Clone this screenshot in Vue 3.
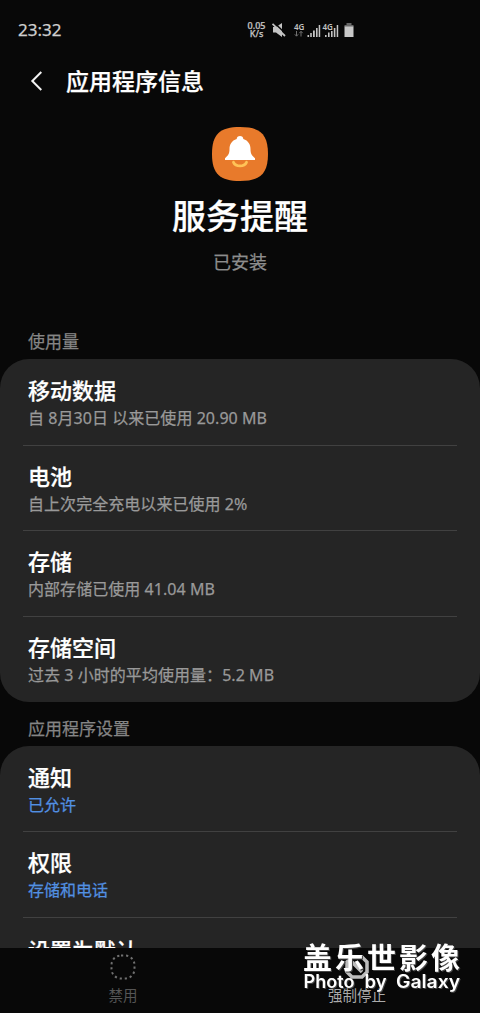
<script setup>
const sections = [
  {
    label: '使用量',
    rows: [
      { title: '移动数据', sub: '自 8月30日 以来已使用 20.90 MB' },
      { title: '电池', sub: '自上次完全充电以来已使用 2%' },
      { title: '存储', sub: '内部存储已使用 41.04 MB' },
      { title: '存储空间', sub: '过去 3 小时的平均使用量：5.2 MB' },
    ],
  },
  {
    label: '应用程序设置',
    rows: [
      { title: '通知', sub: '已允许', link: true },
      { title: '权限', sub: '存储和电话', link: true },
      { title: '设置为默认', sub: '' },
    ],
  },
]
</script>

<template>
  <div class="screen">
    <header class="status">
      <span class="clock">23:32</span>
      <div class="indicators">
        <div class="speed"><span>0.05</span><span>K/s</span></div>
        <svg class="mute" width="14" height="14" viewBox="0 0 14 14">
          <path d="M1 4h3L10 0v14L4 9.500H1z" fill="#c4c4c4" />
          <path d="M2 -.5L14 11" stroke="#080808" stroke-width="1.500" />
          <path d="M.5 .8L13 13" stroke="#c4c4c4" stroke-width="1.800" />
        </svg>
        <svg class="signal" width="45" height="16" viewBox="0 0 45 16">
          <g fill="#c4c4c4">
            <text x="0" y="7.500" class="net">4G</text>
            <path d="M13.500 13h1.600v2h-1.600zM16.200 11h1.600v4h-1.600zM19 8.500h1.800V15H19zM22 6h1.600v9H22zM24.700 3h1.500v12h-1.500z" />
            <text x="28.500" y="7.500" class="net">4G</text>
            <path d="M31 13h1.600v2H31zM34 10.500h1.600V15H34zM37 9h1.600v6H37zM39.800 6h1.600v9h-1.600zM42.700 3h1.500v12h-1.500z" />
          </g>
          <path d="M2.500 9v5M.8 12.300l1.700 1.900 1.700-1.900M7 14.500v-5M5.300 11.200L7 9.300l1.700 1.900" fill="none" stroke="#707070" />
        </svg>
        <svg class="battery" width="10" height="14" viewBox="0 0 10 14">
          <path d="M2.500 0h5v2H9.500v2H.5V2h2z" fill="#666" />
          <path d="M.5 3.500h9V14h-9z" fill="#c8c8c8" />
        </svg>
      </div>
    </header>

    <div class="bar">
      <svg width="12" height="20" viewBox="0 0 12 20">
        <path d="M11.300 1L2.300 10l9 9" fill="none" stroke="#f2f2f2" stroke-width="2" />
      </svg>
      <h1>应用程序信息</h1>
    </div>

    <div class="hero">
      <svg width="56" height="54" viewBox="0 0 56 54">
        <path d="M28 0C48 0 56 7 56 27S48 54 28 54 0 47 0 27 8 0 28 0z" fill="#e87a2b" />
        <path d="M21.500 35.300c2.300 4.800 10.700 4.800 13 0" fill="none" stroke="#ffc357" stroke-width="2.800" stroke-linecap="round" />
        <path d="M28 9c1.900 0 3.300 1.200 3.300 3 5 1.500 7.200 5.500 7.200 10 0 5 1.500 6.500 4.500 9.300V33H13v-1.700c3-2.800 4.500-4.300 4.500-9.300 0-4.500 2.200-8.500 7.200-10 0-1.800 1.400-3 3.300-3z" fill="#fff" />
      </svg>
      <div class="name">服务提醒</div>
      <div class="state">已安装</div>
    </div>

    <section v-for="s in sections" :key="s.label">
      <h2>{{ s.label }}</h2>
      <div class="card">
        <div v-for="r in s.rows" :key="r.title" class="row" :class="{ single: !r.sub }">
          <div class="title">{{ r.title }}</div>
          <div v-if="r.sub" class="sub" :class="{ link: r.link }">{{ r.sub }}</div>
        </div>
      </div>
    </section>

    <footer class="actions">
      <div class="action disabled">
        <svg width="26" height="26" viewBox="0 0 26 26">
          <rect x="1.500" y="1.500" width="23" height="23" rx="9.500" fill="none" stroke="#707070" stroke-width="2" stroke-dasharray="2.200 2.900" />
        </svg>
        <span>禁用</span>
      </div>
      <div class="action">
        <svg width="26" height="26" viewBox="0 0 26 26">
          <path d="M8 3h10l5 5v10l-5 5H8l-5-5V8zM8 8l10 10" fill="none" stroke="#bdbdbd" stroke-width="3.500" />
        </svg>
        <span>强制停止</span>
      </div>
    </footer>

    <svg class="watermark" width="176" height="64" viewBox="0 0 176 64">
      <text x="7" y="32" class="mark-cn" textLength="157">盖乐世影像</text>
      <g class="mark-en">
        <text x="7.500" y="51" textLength="51" lengthAdjust="spacingAndGlyphs">Photo</text>
        <text x="68.500" y="51" textLength="22" lengthAdjust="spacingAndGlyphs">by</text>
        <text x="100" y="51" textLength="64" lengthAdjust="spacingAndGlyphs">Galaxy</text>
      </g>
    </svg>
  </div>
</template>

<style>
html, body { margin: 0; background: #080808; overflow: hidden; }
</style>

<style scoped>
.screen {
  position: relative;
  width: 480px;
  height: 1013px;
  overflow: hidden;
  background: #080808;
  color: #fff;
  font-family: "Noto Sans", "Noto Sans CJK SC", sans-serif;
  -webkit-text-stroke: 0.250px currentColor;
}
.status {
  display: flex;
  align-items: center;
  height: 60px;
  padding-left: 18px;
  box-sizing: border-box;
}
.clock { width: 229px; font-size: 17px; line-height: 20px; color: #cfcfcf; }
.indicators { display: flex; align-items: center; }
.speed {
  display: flex;
  flex-direction: column;
  align-items: center;
  width: 19px;
  font-size: 9px;
  line-height: 8px;
  font-weight: 500;
  color: #c4c4c4;
}
.mute { margin-left: 6px; }
.signal { margin-left: 8px; overflow: visible; }
.net { font-size: 8px; font-weight: 600; }
.battery { margin-left: 5px; }
.bar { display: flex; align-items: center; height: 42px; padding-left: 30px; }
h1 { margin: 0 0 0 24px; font-size: 23px; line-height: 30px; font-weight: 500; }
.hero { display: flex; flex-direction: column; align-items: center; height: 199px; padding-top: 25px; }
.name { margin-top: 10px; font-size: 34px; line-height: 50px; font-weight: 500; }
.state { margin-top: 8px; font-size: 18px; line-height: 26px; color: #8d8d8d; }
h2 { margin: 0; padding-left: 28px; height: 44px; font-size: 17px; line-height: 53px; font-weight: 400; color: #858585; }
section:first-of-type h2 { height: 33px; line-height: 31px; }
.card { background: #252525; border-radius: 29px; padding: 0 23px; }
section { display: flow-root; }
.row { height: 85.700px; box-sizing: border-box; padding: 17px 0 0 5px; }
.row + .row { border-top: 1px solid #414141; padding-top: 16px; }
.row + .single { padding-top: 18px; }
.title { font-size: 22px; line-height: 29px; font-weight: 500; }
.sub { font-size: 16px; line-height: 24px; padding-top: 1px; color: #999; letter-spacing: 0.050px; }
.link { color: #5290e2; letter-spacing: 0; }
.actions {
  position: absolute;
  left: 0;
  right: 0;
  bottom: 0;
  height: 65px;
  display: flex;
  padding: 0 6px;
  box-sizing: border-box;
  background: #080808;
}
.action {
  flex: 1;
  display: flex;
  flex-direction: column;
  align-items: center;
  padding-top: 6px;
  font-size: 14.500px;
  line-height: 22px;
  color: #aaa;
  -webkit-text-stroke: 0;
}
.action span { margin-top: 4px; }
.disabled { color: #555; }
.watermark { position: absolute; left: 296px; top: 937px; filter: drop-shadow(1px 1px 0.500px #444); fill: #fff; -webkit-text-stroke: 0; }
.mark-cn { font-family: "Noto Sans CJK SC", sans-serif; font-size: 29px; font-weight: 700; }
.mark-en { font-family: Inter, sans-serif; font-size: 18px; font-weight: 600; }
</style>
